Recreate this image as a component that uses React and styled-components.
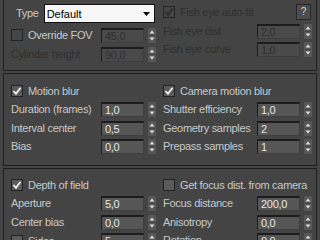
import React from 'react';
import styled, { createGlobalStyle } from 'styled-components';

const GlobalStyle = createGlobalStyle`
  html, body {
    margin: 0;
    padding: 0;
    background: #444444;
    overflow: hidden;
  }
  body {
    font-family: "Liberation Sans", Arial, sans-serif;
    font-size: 11px;
    letter-spacing: -0.3px;
    color: #c8c8c8;
  }
`;

const Page = styled.div`
  width: 320px;
  height: 240px;
  padding-left: 3px;
  box-sizing: border-box;
  display: flex;
  flex-direction: column;
  gap: 2px;
  overflow: hidden;
`;

const Panel = styled.div`
  flex-shrink: 0;
  width: 314px;
  box-sizing: border-box;
  border: 1px solid #1e1e1e;
  border-top: ${p => (p.$open ? 'none' : '1px solid #1e1e1e')};
  padding: 0 0 ${p => p.$padBottom || 0}px 7px;
  display: grid;
  grid-template-columns: 152px 1fr;
`;

const Column = styled.div`
  display: flex;
  flex-direction: column;
  padding-top: ${p => p.$top}px;
  gap: ${p => p.$gap}px;
`;

const Row = styled.div`
  display: grid;
  grid-template-columns: ${p => p.$labelW}px 43px 8px;
  column-gap: 4px;
  align-items: center;
  height: 15px;
`;

const Label = styled.span`
  color: ${p => (p.$disabled ? '#2e2e2e' : '#c8c8c8')};
  white-space: nowrap;
  line-height: 15px;
`;

const CheckLine = styled.label`
  display: flex;
  align-items: center;
  gap: 5px;
  height: ${p => p.$h || 15.5}px;
  white-space: nowrap;
  color: ${p => (p.$disabled ? '#2e2e2e' : '#c8c8c8')};
`;

const Box = styled.span`
  flex-shrink: 0;
  width: 12px;
  height: 12px;
  box-sizing: border-box;
  border: 1px solid #222;
  background: ${p => (p.$disabled ? '#464646' : '#5a5a5a')};
  display: flex;
  align-items: center;
  justify-content: center;
`;

const Field = styled.div`
  height: 15px;
  box-sizing: border-box;
  border-top: 2px solid #1c1c1c;
  border-left: 1px solid #1c1c1c;
  border-right: 1px solid #3e3e3e;
  border-bottom: 1px solid #3e3e3e;
  background: ${p => (p.$disabled ? '#4a4a4a' : '#565656')};
  color: ${p => (p.$disabled ? '#2e2e2e' : '#e6e6e6')};
  padding-left: 3px;
  line-height: 12px;
  overflow: hidden;
`;

const SpinBox = styled.div`
  width: 8px;
  height: 15px;
  background: #575757;
  border-radius: 1px;
  display: flex;
`;

const TypeRow = styled.div`
  display: flex;
  align-items: center;
  gap: 5px;
  height: 19px;
  padding-left: 5px;
`;

const Select = styled.div`
  width: 111px;
  height: 19px;
  box-sizing: border-box;
  border: 1px solid #111;
  background: #f6f6f6;
  color: #000;
  display: flex;
  align-items: center;
  justify-content: space-between;
  padding: 1px 4px 0 2px;
  letter-spacing: 0;
`;

const TopCheckRow = styled.div`
  display: flex;
  align-items: center;
  justify-content: space-between;
  height: 16px;
  padding-right: 5px;
`;

const HelpButton = styled.button`
  width: 15px;
  height: 16px;
  padding: 0;
  border: 1px solid #262626;
  background: #4c4c4c;
  color: #d0d0d0;
  font-family: "Liberation Sans", Arial, sans-serif;
  font-size: 10px;
  line-height: 14px;
  text-align: center;
`;

const Tick = ({ dim }) => (
  <svg width="10" height="10" viewBox="0 0 10 10">
    <path d="M1.5 5 L4 7.8 L8.5 1.8" fill="none" stroke={dim ? '#2a2a2a' : '#f2f2f2'} strokeWidth="1.8" />
  </svg>
);

const Check = ({ on, disabled }) => (
  <Box $disabled={disabled}>{on && <Tick dim={disabled} />}</Box>
);

const Spinner = () => (
  <SpinBox>
    <svg width="8" height="15" viewBox="0 0 8 15">
      <path d="M1.5 5.5 L4 2.5 L6.5 5.5 Z" fill="#e0e0e0" />
      <path d="M1 7.5 H7" stroke="#444" strokeWidth="1" />
      <path d="M1.5 9.5 L4 12.5 L6.5 9.5 Z" fill="#e0e0e0" />
    </svg>
  </SpinBox>
);

const NumRow = ({ label, value, labelW, disabled }) => (
  <Row $labelW={labelW}>
    <Label $disabled={disabled}>{label}</Label>
    <Field $disabled={disabled}>{value}</Field>
    <Spinner />
  </Row>
);

const CheckNumRow = ({ label, value, labelW, on }) => (
  <Row $labelW={labelW}>
    <CheckLine>
      <Check on={on} />
      {label}
    </CheckLine>
    <Field>{value}</Field>
    <Spinner />
  </Row>
);

const L = 86;
const R = 90;

export default function App() {
  return (
    <>
      <GlobalStyle />
      <Page>
        <Panel $open $padBottom={8}>
          <Column $top={4} $gap={4.5}>
            <TypeRow>
              <Label>Type</Label>
              <Select>
                <span>Default</span>
                <svg width="7" height="4" viewBox="0 0 7 4">
                  <path d="M0 0 H7 L3.5 4 Z" fill="#000" />
                </svg>
              </Select>
            </TypeRow>
            <Row $labelW={L}>
              <CheckLine>
                <Check disabled />
                Override FOV
              </CheckLine>
              <Field $disabled>45,0</Field>
              <Spinner />
            </Row>
            <NumRow label="Cylinder height" value="90,0" labelW={L} disabled />
          </Column>
          <Column $top={4} $gap={3.5}>
            <TopCheckRow>
              <CheckLine $h={16} $disabled>
                <Check on disabled />
                Fish eye auto-fit
              </CheckLine>
              <HelpButton>?</HelpButton>
            </TopCheckRow>
            <NumRow label="Fish eye dist" value="2,0" labelW={R} disabled />
            <NumRow label="Fish eye curve" value="1,0" labelW={R} disabled />
          </Column>
        </Panel>

        <Panel $padBottom={11}>
          <Column $top={9} $gap={3.5}>
            <CheckLine>
              <Check on />
              Motion blur
            </CheckLine>
            <NumRow label="Duration (frames)" value="1,0" labelW={L} />
            <NumRow label="Interval center" value="0,5" labelW={L} />
            <NumRow label="Bias" value="0,0" labelW={L} />
          </Column>
          <Column $top={9} $gap={3.5}>
            <CheckLine>
              <Check on />
              Camera motion blur
            </CheckLine>
            <NumRow label="Shutter efficiency" value="1,0" labelW={R} />
            <NumRow label="Geometry samples" value="2" labelW={R} />
            <NumRow label="Prepass samples" value="1" labelW={R} />
          </Column>
        </Panel>

        <Panel $padBottom={11}>
          <Column $top={8} $gap={3.5}>
            <CheckLine>
              <Check on />
              Depth of field
            </CheckLine>
            <NumRow label="Aperture" value="5,0" labelW={L} />
            <NumRow label="Center bias" value="0,0" labelW={L} />
            <CheckNumRow label="Sides" value="5" labelW={L} />
          </Column>
          <Column $top={8} $gap={3.5}>
            <CheckLine>
              <Check />
              Get focus dist. from camera
            </CheckLine>
            <NumRow label="Focus distance" value="200,0" labelW={R} />
            <NumRow label="Anisotropy" value="0,0" labelW={R} />
            <NumRow label="Rotation" value="0,0" labelW={R} />
          </Column>
        </Panel>
      </Page>
    </>
  );
}
